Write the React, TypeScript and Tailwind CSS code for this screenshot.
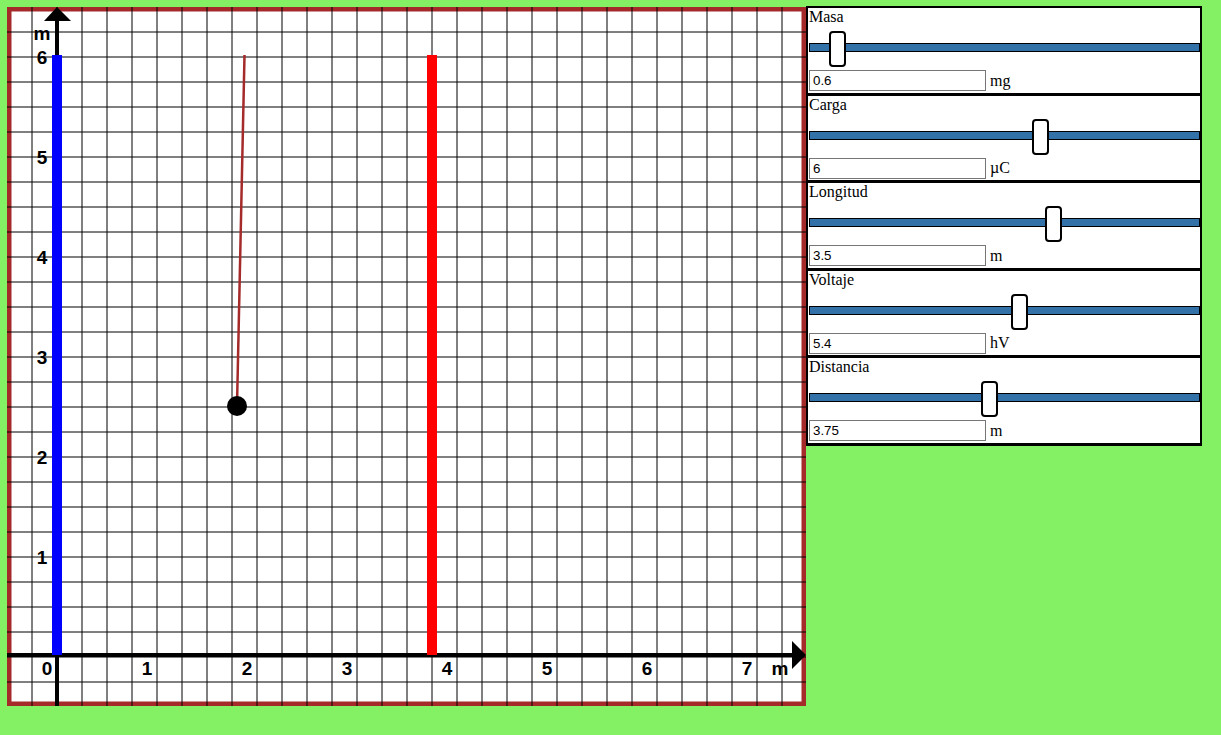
import React from "react"

const controls = [
  { label: "Masa", value: "0.6", unit: "mg", pct: 7.2 },
  { label: "Carga", value: "6", unit: "µC", pct: 59.1 },
  { label: "Longitud", value: "3.5", unit: "m", pct: 62.4 },
  { label: "Voltaje", value: "5.4", unit: "hV", pct: 53.7 },
  { label: "Distancia", value: "3.75", unit: "m", pct: 46 },
]

const TRACK_W = 391
const OX = 50
const OY = 648

function Plot() {
  const vLines = Array.from({ length: 31 }, (_, i) => (i + 1) * 25)
  const hLines = Array.from({ length: 27 }, (_, i) => (i + 1) * 25)

  return (
    <svg width={799} height={699} viewBox="0 0 799 699" className="block">
      <rect x={0} y={0} width={799} height={699} fill="#ffffff" stroke="#a52a2a" strokeWidth={9} />

      {/* grid */}
      {vLines.map((x) => (
        <line key={`v${x}`} x1={x} y1={0} x2={x} y2={699} stroke="#000" strokeWidth={1} />
      ))}
      {hLines.map((y) => (
        <line key={`h${y}`} x1={0} y1={y} x2={799} y2={y} stroke="#000" strokeWidth={1} />
      ))}

      {/* axes */}
      <line x1={OX} y1={10} x2={OX} y2={699} stroke="#000" strokeWidth={4} />
      <polygon points="50,0 37,14 64,14" fill="#000" />
      <line x1={0} y1={OY} x2={790} y2={OY} stroke="#000" strokeWidth={4} />
      <polygon points="799,648 785,634 785,662" fill="#000" />

      {/* plates */}
      <rect x={OX - 5} y={OY - 600} width={10} height={600} fill="#0000ff" />
      <rect x={OX + 375 - 5} y={OY - 600} width={10} height={600} fill="#ff0000" />

      <g fontFamily='"Liberation Sans", Arial, sans-serif' fontWeight="bold" fontSize={19} fill="#000" textAnchor="middle">
        {[0, 1, 2, 3, 4, 5, 6, 7].map((k) => (
          <text key={`x${k}`} x={OX - 10 + k * 100} y={668}>
            {k}
          </text>
        ))}
        <text x={773} y={668}>m</text>
        {[1, 2, 3, 4, 5, 6].map((k) => (
          <text key={`y${k}`} x={35} y={OY - k * 100 + 9}>
            {k}
          </text>
        ))}
        <text x={35} y={33}>m</text>
      </g>

      {/* pendulum */}
      <line x1={237.5} y1={OY - 600} x2={230} y2={399} stroke="#a52a2a" strokeWidth={2.5} />
      <circle cx={230} cy={399} r={10} fill="#000" />
    </svg>
  )
}

function Control({ label, value, unit, pct }: { label: string; value: string; unit: string; pct: number }) {
  return (
    <div className="flex flex-col h-[87.5px] border-b-[3px] border-black pl-px">
      <div className="h-[18px] text-[16px] leading-[18px] text-black">{label}</div>
      <div className="relative h-[44px]">
        <div className="absolute left-0 top-[17px] w-[391px] h-[9px] bg-[#3371a9] border border-black" />
        <div
          className="absolute top-[5px] w-[17px] h-[36px] bg-white border-2 border-black rounded-[4px]"
          style={{ left: (pct / 100) * TRACK_W - 8 }}
        />
      </div>
      <div className="flex items-center h-[21px]">
        <input
          readOnly
          value={value}
          className="w-[177px] h-[21px] border border-[#767676] bg-white px-[3px] text-[13.33px] text-black outline-none"
          style={{ fontFamily: '"Liberation Sans", Arial, sans-serif' }}
        />
        <span className="ml-[4px] text-[16px] leading-[18px] text-black">{unit}</span>
      </div>
    </div>
  )
}

export default function App() {
  return (
    <div className="min-h-screen w-full bg-[#84f064] flex items-start pt-[6px] pl-[7px]">
      <div className="mt-px shrink-0">
        <Plot />
      </div>
      <div className="w-[396px] shrink-0 bg-white border-t-2 border-l-2 border-r-2 border-black font-['Liberation_Serif',_'Times_New_Roman',_serif]">
        {controls.map((c) => (
          <Control key={c.label} {...c} />
        ))}
      </div>
    </div>
  )
}
